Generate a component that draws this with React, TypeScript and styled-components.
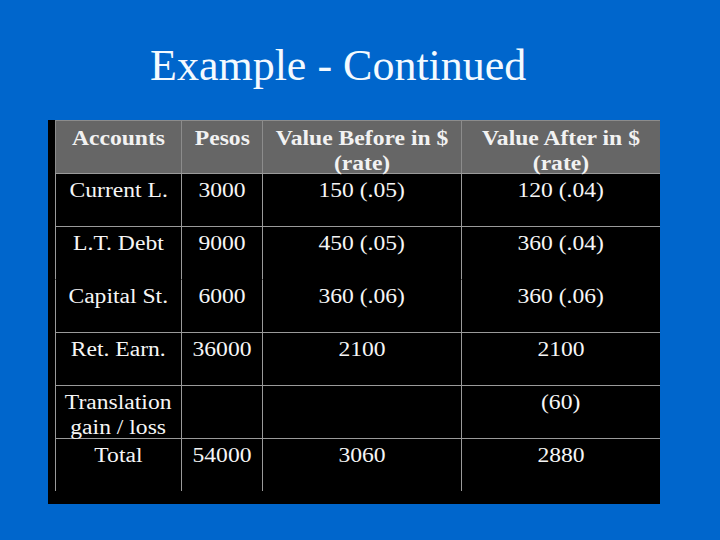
import React from "react";
import styled, { createGlobalStyle } from "styled-components";

const Global = createGlobalStyle`
  html, body { margin: 0; padding: 0; }
  body {
    background: #0066cc;
    width: 720px;
    height: 540px;
    overflow: hidden;
    font-family: "Liberation Serif", "Times New Roman", serif;
  }
`;

const Slide = styled.div`
  width: 720px;
  height: 540px;
  background: #0066cc;
  display: flex;
  flex-direction: column;
`;

const Title = styled.h1`
  margin: 0;
  padding: 41px 0 0 150px;
  height: 50px;
  font-weight: normal;
  font-size: 44px;
  line-height: 50px;
  color: #f4faff;
  white-space: nowrap;
`;

const Panel = styled.div`
  margin: 29px 0 0 48px;
  width: 612px;
  height: 384px;
  box-sizing: border-box;
  padding-left: 7px;
  background: #000;
`;

const Grid = styled.div`
  display: grid;
  grid-template-columns: 126px 81px 199px 199px;
  grid-auto-rows: 53px;
`;

const Cell = styled.div<{ $head?: boolean; $noTop?: boolean }>`
  box-sizing: border-box;
  text-align: center;
  padding-top: ${(p) => (p.$head ? 5 : 4)}px;
  font-size: 20px;
  line-height: 25px;
  font-weight: ${(p) => (p.$head ? "bold" : "normal")};
  color: ${(p) => (p.$head ? "#f2f2f2" : "#f6f6f6")};
  background: ${(p) => (p.$head ? "#666666" : "#000")};
  border-left: 1px solid ${(p) => (p.$head ? "#8c8c8c" : "#9a9a9a")};
  border-top: 1px solid
    ${(p) => (p.$noTop ? "transparent" : p.$head ? "#8c8c8c" : "#9a9a9a")};
  overflow: visible;
  white-space: nowrap;
`;

const Stretch = styled.span`
  display: inline-block;
  transform: scaleX(1.18);
  transform-origin: center;
`;

type Row = { cells: string[][]; noTop?: boolean };

const header: string[][] = [
  ["Accounts"],
  ["Pesos"],
  ["Value Before in $", "(rate)"],
  ["Value After in $", "(rate)"],
];

const rows: Row[] = [
  { cells: [["Current L."], ["3000"], ["150 (.05)"], ["120 (.04)"]] },
  { cells: [["L.T. Debt"], ["9000"], ["450 (.05)"], ["360 (.04)"]] },
  { cells: [["Capital St."], ["6000"], ["360 (.06)"], ["360 (.06)"]], noTop: true },
  { cells: [["Ret. Earn."], ["36000"], ["2100"], ["2100"]] },
  { cells: [["Translation", "gain / loss"], [], [], ["(60)"]] },
  { cells: [["Total"], ["54000"], ["3060"], ["2880"]] },
];

const Lines = ({ lines }: { lines: string[] }) =>
  lines.length ? (
    <Stretch>
      {lines.map((l, i) => (
        <React.Fragment key={i}>
          {i > 0 && <br />}
          {l}
        </React.Fragment>
      ))}
    </Stretch>
  ) : null;

export default function App() {
  return (
    <>
      <Global />
      <Slide>
        <Title>Example - Continued</Title>
        <Panel>
          <Grid>
            {header.map((h, i) => (
              <Cell key={"h" + i} $head>
                <Lines lines={h} />
              </Cell>
            ))}
            {rows.map((r, ri) =>
              r.cells.map((c, ci) => (
                <Cell key={ri + "-" + ci} $noTop={r.noTop}>
                  <Lines lines={c} />
                </Cell>
              ))
            )}
          </Grid>
        </Panel>
      </Slide>
    </>
  );
}
